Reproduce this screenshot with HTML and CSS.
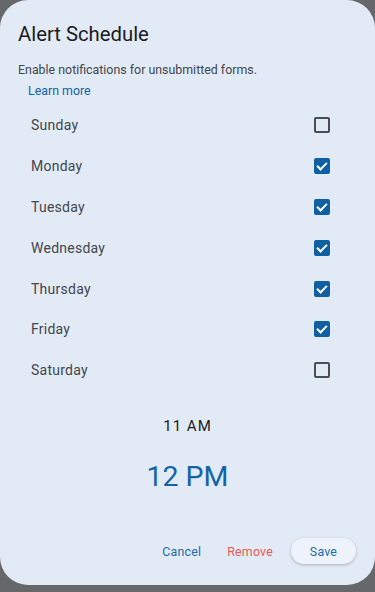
FILE: index.html
```html
<!DOCTYPE html>
<html lang="en">
<head>
    <meta charset="UTF-8">
    <meta name="viewport" content="width=device-width, initial-scale=1.0">
    <title>Alert Schedule</title>
    <link rel="stylesheet" href="styles.css">
</head>
<body>

<div class="dialog">
    <h1 class="title">Alert Schedule</h1>
    <p class="subtitle">Enable notifications for unsubmitted forms.</p>
    <a class="learn" href="#">Learn more</a>

    <ul class="days">
        <li><span>Sunday</span><span class="box"></span></li>
        <li><span>Monday</span><span class="box checked"></span></li>
        <li><span>Tuesday</span><span class="box checked"></span></li>
        <li><span>Wednesday</span><span class="box checked"></span></li>
        <li><span>Thursday</span><span class="box checked"></span></li>
        <li><span>Friday</span><span class="box checked"></span></li>
        <li><span>Saturday</span><span class="box"></span></li>
    </ul>

    <div class="picker">
        <div class="hour">11 AM</div>
        <div class="hour current">12 PM</div>
    </div>

    <div class="actions">
        <button class="text">Cancel</button>
        <button class="text danger">Remove</button>
        <button class="pill">Save</button>
    </div>
</div>

</body>
</html>
```

FILE: styles.css
```css
html, body {
    margin: 0;
    height: 100%;
}
body {
    background-color: #666768;
    font-family: Roboto, "Noto Sans", sans-serif;
}
.dialog {
    box-sizing: border-box;
    width: 375px;
    height: 585px;
    background-color: #e2eaf5;
    border-radius: 28px;
    padding: 20px 18px 0 18px;
    display: flex;
    flex-direction: column;
}
.title {
    margin: 0;
    font-size: 20.3px;
    font-weight: 400;
    line-height: 28px;
    color: #1b1c1f;
}
.subtitle {
    margin: 13px 0 0 0;
    font-size: 12.4px;
    line-height: 18px;
    color: #43474e;
}
.learn {
    align-self: flex-start;
    margin: 3px 0 0 10px;
    font-size: 12.4px;
    line-height: 18px;
    color: #1363a6;
    text-decoration: none;
}
.days {
    list-style: none;
    margin: 5px 0 0 0;
    padding: 0 27px 0 13px;
}
.days li {
    display: flex;
    justify-content: space-between;
    align-items: center;
    height: 40.8px;
    font-size: 14px;
    letter-spacing: 0.25px;
    color: #43474e;
}
.box {
    box-sizing: border-box;
    width: 16px;
    height: 16px;
    border: 2px solid #4a4d52;
    border-radius: 2px;
    position: relative;
}
.box.checked {
    background-color: #0f5fa3;
    border-color: #0f5fa3;
}
.box.checked::after {
    content: "";
    position: absolute;
    left: 3px;
    top: 0px;
    width: 4px;
    height: 8px;
    border: solid #fff;
    border-width: 0 2px 2px 0;
    transform: rotate(45deg);
}
.picker {
    display: flex;
    flex-direction: column;
    align-items: center;
    margin-top: 23px;
}
.hour {
    font-size: 15px;
    line-height: 24px;
    letter-spacing: 1px;
    color: #1b1c1f;
}
.hour.current {
    margin-top: 21px;
    font-size: 28.5px;
    line-height: 36px;
    letter-spacing: 0;
    color: #1363a6;
}
.actions {
    display: flex;
    justify-content: flex-end;
    align-items: center;
    margin-top: auto;
    margin-bottom: 21px;
    margin-right: 1px;
}
.actions button {
    font-family: Roboto, "Noto Sans", sans-serif;
    font-size: 12.4px;
    font-weight: 400;
    letter-spacing: 0.2px;
    height: 26px;
    padding: 0 12px;
    border: none;
    border-radius: 13px;
    background: none;
    color: #1e6aab;
    cursor: pointer;
}
.actions button.danger {
    color: #e85a57;
    margin-left: 2px;
}
.actions button.pill {
    width: 65px;
    margin-left: 6px;
    background-color: #eef3fb;
    box-shadow: 0 1px 3px rgba(0, 0, 0, 0.25);
}
```
